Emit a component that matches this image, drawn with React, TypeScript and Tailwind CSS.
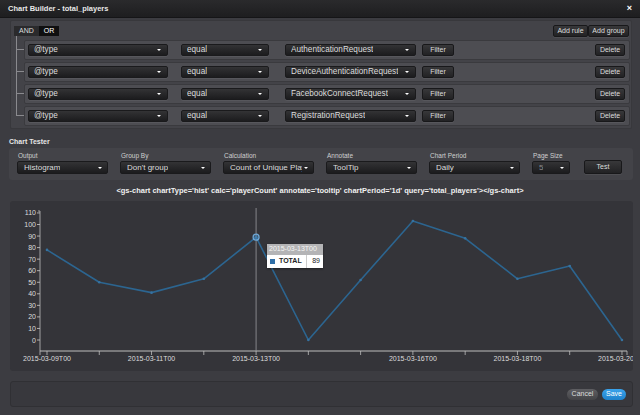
import React from 'react'

const font = { fontFamily: '"Liberation Sans", Arial, sans-serif' }

function Caret() {
    return <span className="shrink-0 w-0 h-0 border-l-[2px] border-r-[2px] border-t-[2.5px] border-l-transparent border-r-transparent border-t-white"></span>
}

function Select({ label, w }: { label: string; w: string }) {
    return (
        <div className={`${w} h-[12px] flex items-center justify-between gap-[2px] rounded-[2px] bg-gradient-to-b from-[#333335] to-[#1c1c1e] border border-[#1a1a1c] pl-[5px] pr-[6px] text-[8.2px] text-[#dcdcdc] shadow-[0_1px_0_rgba(255,255,255,0.06)]`}>
            <span className="whitespace-nowrap overflow-hidden">{label}</span>
            <Caret />
        </div>
    )
}

function Btn({ label, w, h = 'h-[12px]' }: { label: string; w: string; h?: string }) {
    return (
        <div className={`${w} ${h} flex items-center justify-center rounded-[2px] bg-gradient-to-b from-[#38383a] to-[#222224] border border-[#18181a] text-[7px] text-[#dddddd] shadow-[0_1px_0_rgba(255,255,255,0.06)]`}>
            {label}
        </div>
    )
}

function RuleRow({ value }: { value: string }) {
    return (
        <div className="relative h-[20px]">
            <div className="absolute left-[-8px] top-[9px] w-[8px] h-px bg-[#8a8a8e]"></div>
            <div className="h-full flex items-center pl-[3px] pr-[4px] bg-[#4d4d52] border border-[#3a3a3e] rounded-[2px]">
                <Select label="@type" w="w-[140px]" />
                <div className="w-[13px]"></div>
                <Select label="equal" w="w-[88px]" />
                <div className="w-[16px]"></div>
                <Select label={value} w="w-[131px]" />
                <div className="w-[6px]"></div>
                <Btn label="Filter" w="w-[32px]" />
                <div className="flex-1"></div>
                <Btn label="Delete" w="w-[30px]" />
            </div>
        </div>
    )
}

function Field({ label, value, w, dim }: { label: string; value: string; w: string; dim?: boolean }) {
    return (
        <div className="flex flex-col gap-[1px]">
            <div className="text-[6.5px] text-[#cfcfcf] pl-[1px] leading-[8px]">{label}</div>
            <div className={`${w} h-[13px] flex items-center justify-between gap-[2px] rounded-[2px] bg-gradient-to-b from-[#333335] to-[#1c1c1e] border border-[#1a1a1c] pl-[6px] pr-[5px] text-[8px] ${dim ? 'text-[#8a8a8e]' : 'text-[#dcdcdc]'}`}>
                <span className="whitespace-nowrap overflow-hidden">{value}</span>
                <Caret />
            </div>
        </div>
    )
}

const data = [78, 50, 41, 53, 89, 0, 52, 103, 88, 53, 64, 0]

function Chart() {
    const xs = (i: number) => 37 + i * 52.27
    const ys = (v: number) => 139 - v * 1.155
    const pts = data.map((v, i) => `${xs(i)},${ys(v)}`).join(' ')
    const yTicks = [0, 10, 20, 30, 40, 50, 60, 70, 80, 90, 100, 110]
    const labels: Record<number, string> = { 0: '2015-03-09T00', 2: '2015-03-11T00', 4: '2015-03-13T00', 7: '2015-03-16T00', 9: '2015-03-18T00', 11: '2015-03-20T00' }
    return (
        <svg width="623" height="170" className="absolute left-0 top-0" style={font}>
            {yTicks.map((t) => (
                <g key={t}>
                    <line x1="27" x2="30" y1={ys(t)} y2={ys(t)} stroke="#cfcfcf" strokeWidth="0.8" />
                    <text x="26" y={ys(t) + 2.5} textAnchor="end" fontSize="7" fill="#dcdcdc">{t}</text>
                </g>
            ))}
            <line x1="30" x2="30" y1="10" y2="150" stroke="#bdbdbd" strokeWidth="0.8" />
            <line x1="28" x2="30" y1="10" y2="10" stroke="#bdbdbd" strokeWidth="0.8" />
            <line x1="30" x2="617" y1="150" y2="150" stroke="#bdbdbd" strokeWidth="1" />
            <line x1="30" x2="30" y1="150" y2="154" stroke="#bdbdbd" strokeWidth="0.8" />
            <line x1="617" x2="617" y1="150" y2="154" stroke="#bdbdbd" strokeWidth="0.8" />
            {data.map((_, i) => (
                <line key={i} x1={xs(i)} x2={xs(i)} y1="150" y2="154" stroke="#bdbdbd" strokeWidth="0.8" />
            ))}
            {Object.entries(labels).map(([i, l]) => (
                <text key={i} x={xs(Number(i))} y="160" textAnchor="middle" fontSize="7" fill="#dcdcdc">{l}</text>
            ))}
            <line x1={xs(4)} x2={xs(4)} y1="7" y2="150" stroke="#9a9a9e" strokeWidth="0.8" />
            <polyline points={pts} fill="none" stroke="#2c6590" strokeWidth="1.6" strokeLinejoin="round" />
            {data.map((v, i) => (
                <circle key={i} cx={xs(i)} cy={ys(v)} r="1.3" fill="#3672a0" />
            ))}
            <circle cx={xs(4)} cy={ys(89)} r="3" fill="#4e8fc4" fillOpacity="0.4" stroke="#6ea8d8" strokeWidth="1.2" />
        </svg>
    )
}

export default function App() {
    return (
        <div className="w-[640px] h-[415px] overflow-hidden bg-[#3c3c41] flex flex-col" style={font}>
            <div className="h-[18px] shrink-0 flex items-center justify-between px-[8px] bg-gradient-to-b from-[#2a2a2c] to-[#1e1e20] border-b border-[#151517]">
                <span className="text-[7.5px] font-bold text-[#e8e8e8]">Chart Builder - total_players</span>
                <span className="text-[9px] font-bold text-white">×</span>
            </div>

            <div className="ml-[10px] mr-[8px] mt-[2px] h-[109px] bg-[#434348] rounded-[2px] border border-[#38383c] relative">
                <div className="flex items-center justify-between pl-[3px] pr-[2px] pt-[4px]">
                    <div className="flex h-[10px] text-[7px] text-[#dddddd]">
                        <div className="w-[25px] flex items-center justify-center bg-[#2a2a2c]">AND</div>
                        <div className="w-[20px] flex items-center justify-center bg-[#0f0f10] text-white">OR</div>
                    </div>
                    <div className="flex">
                        <Btn label="Add rule" w="w-[35px]" h="h-[12px]" />
                        <Btn label="Add group" w="w-[41px]" h="h-[12px]" />
                    </div>
                </div>
                <div className="absolute left-[5px] top-[15px] w-px h-[79px] bg-[#8a8a8e]"></div>
                <div className="ml-[13px] mr-[1px] mt-[3px] flex flex-col gap-[2px]">
                    <RuleRow value="AuthenticationRequest" />
                    <RuleRow value="DeviceAuthenticationRequest" />
                    <RuleRow value="FacebookConnectRequest" />
                    <RuleRow value="RegistrationRequest" />
                </div>
            </div>

            <div className="ml-[9px] mt-[9px] text-[7px] font-bold text-[#e6e6e6] leading-[8px]">Chart Tester</div>
            <div className="ml-[9px] mr-[7px] mt-[2px] h-[32px] bg-[#434348] rounded-[3px] flex items-start gap-[12px] pl-[8px] pt-[4px]">
                <Field label="Output" value="Histogram" w="w-[91px]" />
                <Field label="Group By" value="Don't group" w="w-[91px]" />
                <Field label="Calculation" value="Count of Unique Players" w="w-[91px]" />
                <Field label="Annotate" value="ToolTip" w="w-[91px]" />
                <Field label="Chart Period" value="Daily" w="w-[91px]" />
                <Field label="Page Size" value="5" w="w-[38px]" dim />
                <div className="pt-[8px] pl-[2px]">
                    <Btn label="Test" w="w-[38px]" h="h-[14px]" />
                </div>
            </div>

            <div className="mt-[6px] text-center text-[7.5px] font-bold text-[#f0f0f0] leading-[10px]">
                {"<gs-chart chartType='hist' calc='playerCount' annotate='tooltip' chartPeriod='1d' query='total_players'></gs-chart>"}
            </div>

            <div className="ml-[10px] mr-[7px] mt-[5px] h-[170px] bg-[#343439] rounded-[3px] relative overflow-hidden">
                <Chart />
                <div className="absolute left-[257px] top-[43px] w-[56px] text-[7px] shadow-[0_1px_2px_rgba(0,0,0,0.4)]">
                    <div className="h-[11px] bg-[#b4b4b6] text-[#f4f4f4] flex items-center pl-[2px]">2015-03-13T00</div>
                    <div className="h-[13px] bg-white flex items-center pl-[3px] text-[#222]">
                        <span className="w-[5px] h-[5px] bg-[#2f6fa8] mr-[4px]"></span>
                        <span className="font-bold flex-1">TOTAL</span>
                        <span className="border-l border-[#ccc] pl-[5px] pr-[3px] h-full flex items-center">89</span>
                    </div>
                </div>
            </div>

            <div className="ml-[10px] mr-[7px] mt-[10px] h-[26px] bg-[#38383d] rounded-[3px] flex items-center justify-end gap-[4px] pr-[6px] border border-[#303034]">
                <div className="w-[31px] h-[11px] rounded-full bg-gradient-to-b from-[#5e5e62] to-[#444447] text-[7px] text-[#dddddd] flex items-center justify-center">Cancel</div>
                <div className="w-[24px] h-[11px] rounded-full bg-gradient-to-b from-[#3aa3ec] to-[#1f82cc] text-[7px] text-white flex items-center justify-center">Save</div>
            </div>
        </div>
    )
}
